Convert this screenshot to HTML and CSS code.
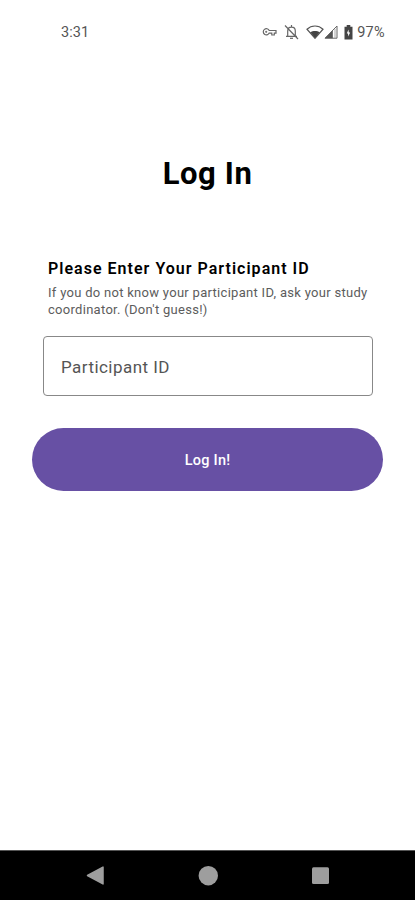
FILE: index.html
```
<!DOCTYPE html>
<html lang="en">
<head>
<meta charset="utf-8">
<title>Log In</title>
<link rel="stylesheet" href="styles.css">
</head>
<body>
<header class="status">
  <span class="time">3:31</span>
  <div class="indicators">
    <svg class="key" width="15" height="8" viewBox="0 0 15 8"><path d="M7.2 2.5A3.1 3.1 0 1 0 7.2 5.1H9.8V7H12.3V5.1H14V2.5Z" fill="none" stroke="#666" stroke-width="1.2"/><circle cx="4.2" cy="3.8" r="1.1" fill="#777"/></svg>
    <svg class="bell" width="15" height="16" viewBox="0 0 15 16" fill="none" stroke="#666" stroke-width="1.2"><path d="M3.7 12.3V7C3.7 4.8 5.3 3.2 7.5 3.2S11.3 4.8 11.3 7V12.3M2 12.4H13M7.5 1V3M1 1.5L14 15"/><path d="M6 14.3H9"/></svg>
    <svg class="wifi" width="18" height="14" viewBox="0 0 18 14"><path d="M1 4.2C5.5-.1 12.5-.1 17 4.2L9 13.3Z" fill="none" stroke="#555" stroke-width="1.2"/><path d="M4.2 7.3C7 5.4 11 5.4 13.8 7.3L9 13Z" fill="#444"/></svg>
    <svg class="signal" width="14" height="14" viewBox="0 0 14 14"><path d="M1 13.2L13 1V13.2Z" fill="none" stroke="#666"/><path d="M1 13.2L8.8 5.3V13.2Z" fill="#555"/><path d="M11 4V13" stroke="#aaa"/></svg>
    <svg class="battery" width="9" height="15" viewBox="0 0 9 15"><path d="M2.7 0H6.3V1.8H8.5V14.5H.5V1.8H2.7Z" fill="#444"/><path d="M4.5 4.5L2.8 8.4H4.1V11.5L6.2 7.4H4.8Z" fill="#fff"/></svg>
    <span class="percent">97%</span>
  </div>
</header>
<main class="login">
  <h1>Log In</h1>
  <h2>Please Enter Your Participant ID</h2>
  <p>If you do not know your participant ID, ask your study<br>coordinator. (Don't guess!)</p>
  <input class="field" type="text" placeholder="Participant ID" aria-label="Participant ID">
  <button class="submit" type="button">Log In!</button>
</main>
<nav class="navbar">
  <svg width="20" height="20" viewBox="0 0 20 20"><path d="M2.5 9.5L18 1.1V17.9Z" fill="#9e9e9e" stroke="#9e9e9e" stroke-width="1.5" stroke-linejoin="round"/></svg>
  <svg width="20" height="20" viewBox="0 0 20 20"><circle cx="10.3" cy="9.7" r="9.7" fill="#9e9e9e"/></svg>
  <svg width="20" height="20" viewBox="0 0 20 20"><rect x="2" y="1.2" width="17" height="16.8" rx="1.5" fill="#9e9e9e"/></svg>
</nav>
</body>
</html>
```
FILE: styles.css
```
* { box-sizing: border-box; }
body {
  margin: 0;
  height: 900px;
  display: flex;
  flex-direction: column;
  overflow: hidden;
  background: #fff;
  color: #000;
  font-family: Roboto, "Liberation Sans", sans-serif;
}
.status {
  height: 64px;
  padding: 0 30px 0 61px;
  display: flex;
  align-items: center;
  justify-content: space-between;
  color: #555;
}
.time { font-size: 14.5px; letter-spacing: 0.1px; }
.indicators { display: flex; align-items: center; }
.bell { margin-left: 7px; }
.wifi { margin-left: 7px; }
.signal { margin-left: 0; }
.battery { margin-left: 6px; }
.percent { margin-left: 4px; font-size: 14.5px; letter-spacing: 0.3px; }
.login {
  flex: 1;
  padding: 91px 32px 0;
  display: flex;
  flex-direction: column;
}
h1 {
  margin: 0;
  text-align: center;
  font-size: 31px;
  line-height: 38px;
  font-weight: 700;
  letter-spacing: 0.6px;
}
h2 {
  margin: 66px 16px 0;
  font-size: 16px;
  line-height: 20px;
  font-weight: 600;
  letter-spacing: 1.02px;
  white-space: nowrap;
}
p {
  margin: 5px 16px 0;
  font-size: 13px;
  line-height: 17px;
  letter-spacing: 0.29px;
  color: #5c5c5c;
  white-space: nowrap;
}
.field {
  margin: 18px 10px 0 11px;
  height: 60px;
  padding: 2px 17px 0;
  border: 1px solid #888;
  border-radius: 4px;
  background: #fff;
  font: 17px Roboto, "Liberation Sans", sans-serif;
  letter-spacing: 0.45px;
}
.field::placeholder { color: #555; opacity: 1; }
.submit {
  margin-top: 32px;
  height: 63px;
  padding: 2px 0 0;
  border: 0;
  border-radius: 32px;
  background: #6750a4;
  color: #fff;
  font: 500 14.5px Roboto, "Liberation Sans", sans-serif;
  letter-spacing: 0.25px;
}
.navbar {
  height: 50px;
  padding: 0 85px;
  display: flex;
  align-items: center;
  justify-content: space-between;
  background: #000;
  border-top: 1px solid #555;
}
```
